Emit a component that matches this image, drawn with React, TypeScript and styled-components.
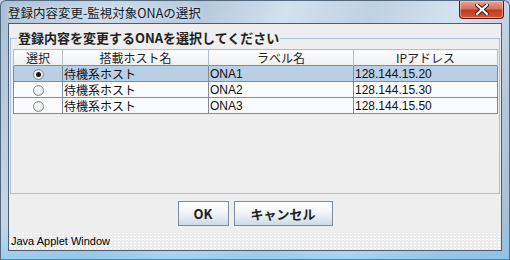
import React from "react";
import styled, { createGlobalStyle } from "styled-components";

const GlobalStyle = createGlobalStyle`
  html, body { margin: 0; padding: 0; background: #bccfe3; }
  * { box-sizing: border-box; }
`;

const JP = `"Noto Sans CJK JP", "Liberation Sans", sans-serif`;
const LATIN = `"Liberation Sans", "Noto Sans CJK JP", sans-serif`;

const Window = styled.div`
  width: 510px;
  height: 260px;
  display: flex;
  flex-direction: column;
  padding: 0 7px 8px 7px;
  border-radius: 6px 6px 0 0;
  border: 1px solid #55697e;
  border-bottom-color: #2f8fc8;
  background:
    linear-gradient(180deg, rgba(255,255,255,0) 85%, rgba(120,200,240,0.55) 100%),
    linear-gradient(115deg, #a9bfd6 0%, #c9d8e8 18%, #b4c8dd 32%, #d3e0ee 46%, #bfd1e4 60%, #d6e2ef 74%, #b3c7dc 88%, #a7bdd4 100%);
  overflow: hidden;
`;

const TitleBar = styled.div`
  height: 22px;
  display: flex;
  align-items: flex-start;
  justify-content: space-between;
  flex: none;
`;

const TitleText = styled.div`
  font-family: ${JP};
  font-size: 12.5px;
  line-height: 14px;
  padding-top: 5px;
  color: #0e1a28;
  text-shadow: 0 0 6px rgba(255,255,255,0.9);
`;

const CloseButton = styled.div`
  width: 45px;
  height: 18px;
  margin-top: 0px;
  margin-right: -2px;
  border: 1px solid #5b1a10;
  border-top: none;
  border-radius: 0 0 4px 4px;
  background: linear-gradient(180deg, #e9a497 0%, #d7705c 45%, #c0391f 55%, #cf5a3a 100%);
  box-shadow: inset 0 0 0 1px rgba(255,220,210,0.5);
  display: flex;
  align-items: center;
  justify-content: center;
`;

const Content = styled.div`
  flex: 1;
  display: flex;
  flex-direction: column;
  background: #eeeeee;
  border: 1px solid #4c5d70;
`;

const GroupBox = styled.fieldset`
  flex: 1;
  margin: 6px 1px 0 1px;
  padding: 3px 2px 0 2px;
  border: 1px solid #a8c0d8;
  min-width: 0;
`;

const Legend = styled.legend`
  font-family: ${JP};
  font-weight: bold;
  font-size: 13px;
  line-height: 16px;
  color: #222;
  padding: 0 1px;
  margin-left: 4px;
`;

const Table = styled.table`
  width: 484px;
  border-collapse: collapse;
  table-layout: fixed;
`;

const HeadCell = styled.th<{ $w: number }>`
  width: ${(p) => p.$w}px;
  height: 16px;
  padding: 0;
  font-family: ${JP};
  font-weight: normal;
  font-size: 12px;
  line-height: 14px;
  color: #222;
  text-align: center;
  background: linear-gradient(180deg, #fdfdfd 0%, #eef0f2 100%);
  border: 1px solid #b3bec8;
  border-bottom: none;
`;

const Row = styled.tr<{ $selected?: boolean }>`
  background: ${(p) => (p.$selected ? "#b8cfe5" : "#fafbfd")};
`;

const Cell = styled.td<{ $latin?: boolean; $center?: boolean }>`
  height: 16px;
  padding: 0 0 0 1px;
  font-family: ${(p) => (p.$latin ? LATIN : JP)};
  font-size: 12px;
  line-height: 14px;
  color: #111;
  text-align: ${(p) => (p.$center ? "center" : "left")};
  border: 1px solid #7e8d9c;
  white-space: nowrap;
  overflow: hidden;
`;

const Radio = styled.span<{ $checked?: boolean }>`
  display: inline-block;
  vertical-align: middle;
  width: 11px;
  height: 11px;
  border-radius: 50%;
  border: 1px solid #7d8a97;
  background: radial-gradient(circle at 45% 35%, #ffffff 0%, #eef2f6 45%, #c9d3dd 100%);
  position: relative;
  margin-top: -2px;
  &::after {
    content: "";
    display: ${(p) => (p.$checked ? "block" : "none")};
    position: absolute;
    left: 2px;
    top: 2px;
    width: 5px;
    height: 5px;
    border-radius: 50%;
    background: #111;
  }
`;

const ButtonRow = styled.div`
  display: flex;
  justify-content: center;
  gap: 5px;
  padding: 7px 0 6px 0;
  flex: none;
`;

const Button = styled.button<{ $w: number }>`
  width: ${(p) => p.$w}px;
  height: 25px;
  padding: 0;
  font-family: ${JP};
  font-weight: bold;
  font-size: 13px;
  color: #222;
  border: 1px solid #7b8e9f;
  border-radius: 0;
  background: linear-gradient(180deg, #ffffff 0%, #f4f7fa 40%, #dde7f0 75%, #ccd9e6 100%);
`;

const StatusBar = styled.div`
  height: 18px;
  flex: none;
  padding: 2px 0 0 2px;
  font-family: ${LATIN};
  font-size: 11px;
  line-height: 14px;
  color: #000;
  background-color: #ececec;
  background-image: radial-gradient(circle, rgba(255,255,255,0.95) 0.8px, transparent 1px);
  background-size: 4px 3px;
`;

type RowData = { host: string; label: string; ip: string; selected?: boolean };

const rows: RowData[] = [
  { host: "待機系ホスト", label: "ONA1", ip: "128.144.15.20", selected: true },
  { host: "待機系ホスト", label: "ONA2", ip: "128.144.15.30" },
  { host: "待機系ホスト", label: "ONA3", ip: "128.144.15.50" },
];

export default function App() {
  return (
    <>
      <GlobalStyle />
      <Window>
        <TitleBar>
          <TitleText>登録内容変更-監視対象ONAの選択</TitleText>
          <CloseButton>
            <svg width="14" height="11" viewBox="0 0 14 11">
              <path d="M2 1 L12 10 M12 1 L2 10" stroke="#4a1208" strokeWidth="4" strokeLinecap="square" />
              <path d="M2 1 L12 10 M12 1 L2 10" stroke="#ffffff" strokeWidth="2.2" strokeLinecap="square" />
            </svg>
          </CloseButton>
        </TitleBar>
        <Content>
          <GroupBox>
            <Legend>登録内容を変更するONAを選択してください</Legend>
            <Table>
              <thead>
                <tr>
                  <HeadCell $w={49}>選択</HeadCell>
                  <HeadCell $w={146}>搭載ホスト名</HeadCell>
                  <HeadCell $w={145}>ラベル名</HeadCell>
                  <HeadCell $w={144}>IPアドレス</HeadCell>
                </tr>
              </thead>
              <tbody>
                {rows.map((r) => (
                  <Row key={r.label} $selected={r.selected}>
                    <Cell $center>
                      <Radio $checked={r.selected} />
                    </Cell>
                    <Cell>{r.host}</Cell>
                    <Cell $latin>{r.label}</Cell>
                    <Cell $latin>{r.ip}</Cell>
                  </Row>
                ))}
              </tbody>
            </Table>
          </GroupBox>
          <ButtonRow>
            <Button $w={51}>OK</Button>
            <Button $w={99}>キャンセル</Button>
          </ButtonRow>
          <StatusBar>Java Applet Window</StatusBar>
        </Content>
      </Window>
    </>
  );
}
